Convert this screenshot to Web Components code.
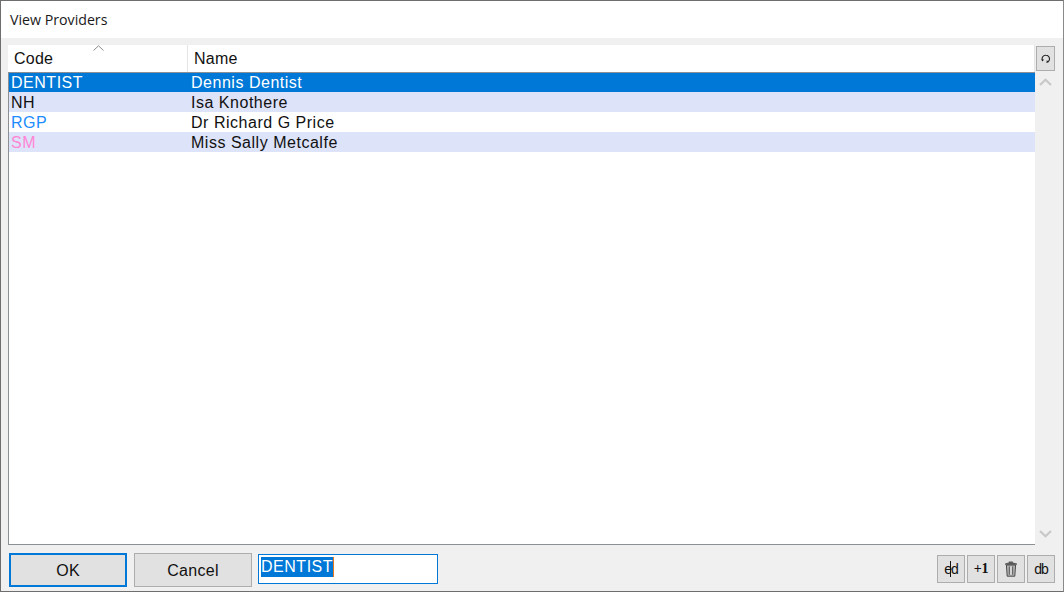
<!DOCTYPE html>
<html>
<head>
<meta charset="utf-8">
<title>View Providers</title>
<style>
  html, body { margin: 0; padding: 0; background: #f0f0f0; }
  body { width: 1064px; height: 592px; overflow: hidden; }
</style>
</head>
<body>
<provider-dialog heading="View Providers">
  <provider-grid>
    <provider-row code="DENTIST" name="Dennis Dentist" selected></provider-row>
    <provider-row code="NH" name="Isa Knothere" striped></provider-row>
    <provider-row code="RGP" name="Dr Richard G Price" code-color="#1e8cff"></provider-row>
    <provider-row code="SM" name="Miss Sally Metcalfe" code-color="#ff85d5" striped></provider-row>
  </provider-grid>
  <dialog-button slot="footer" default>OK</dialog-button>
  <dialog-button slot="footer">Cancel</dialog-button>
  <code-field slot="footer" value="DENTIST"></code-field>
  <tool-button slot="tools" kind="ed">ed</tool-button>
  <tool-button slot="tools" kind="plus">+1</tool-button>
  <tool-button slot="tools" icon="trash"></tool-button>
  <tool-button slot="tools" kind="db">db</tool-button>
</provider-dialog>

<script>
class ProviderDialog extends HTMLElement {
  constructor() {
    super();
    const shadow = this.attachShadow({ mode: 'open' });
    shadow.innerHTML = `
    <style>
      :host {
        display: flex;
        flex-direction: column;
        box-sizing: border-box;
        width: 1064px;
        height: 592px;
        border: 1px solid #6e6e6e;
        border-right-color: #8a8a8a;
        background: #f0f0f0;
        font-family: "Liberation Sans", Arial, sans-serif;
      }
      .title {
        height: 37px;
        flex: none;
        box-sizing: border-box;
        padding: 10px 0 0 9px;
        background: #fff;
        font: 14.2px/18px "Open Sans", "Noto Sans", sans-serif;
        color: #1a1a1a;
      }
      .main {
        flex: 1;
        min-height: 0;
        display: flex;
        padding: 7px 8px 0 7px;
      }
      .footer {
        flex: none;
        height: 46px;
        box-sizing: border-box;
        display: flex;
        justify-content: space-between;
        padding: 8px 8px 0 8px;
      }
      .left { display: flex; gap: 7px; }
      .right { display: flex; gap: 2px; padding-top: 2px; }
      ::slotted(code-field) { margin-left: -1px; }
    </style>
    <div class="title"></div>
    <div class="main"><slot></slot></div>
    <div class="footer">
      <div class="left"><slot name="footer"></slot></div>
      <div class="right"><slot name="tools"></slot></div>
    </div>`;
  }
  connectedCallback() {
    this.shadowRoot.querySelector('.title').textContent = this.getAttribute('heading');
  }
}

class ProviderGrid extends HTMLElement {
  constructor() {
    super();
    const shadow = this.attachShadow({ mode: 'open' });
    shadow.innerHTML = `
    <style>
      :host { display: flex; flex: 1; min-width: 0; }
      .table { flex: 1; display: flex; flex-direction: column; min-width: 0; }
      .head {
        flex: none;
        height: 27px;
        display: flex;
        background: #fff;
        font-size: 16px;
        letter-spacing: .25px;
        color: #111;
      }
      .head div { box-sizing: border-box; position: relative; line-height: 28px; }
      .code { width: 180px; padding-left: 6px; border-right: 1px solid #e5e5e5; }
      .name { flex: 1; padding-left: 6px; border-right: 1px solid #e5e5e5; }
      .sort { position: absolute; left: 85px; top: 0; display: block; }
      .rows {
        flex: 1;
        background: #fff;
        border: solid #8c8f94;
        border-width: 1px 0 1px 1px;
        min-height: 0;
      }
      .scroll {
        flex: none;
        width: 19px;
        margin-left: 1px;
        display: flex;
        flex-direction: column;
        align-items: center;
      }
      .refresh {
        box-sizing: border-box;
        width: 19px;
        height: 25px;
        margin-top: 1px;
        background: #e1e1e1;
        border: 1px solid #adadad;
        display: flex;
        align-items: center;
        justify-content: center;
      }
      .up { margin-top: 7px; }
      .down { margin-top: auto; margin-bottom: 7px; }
    </style>
    <div class="table">
      <div class="head">
        <div class="code">Code<svg class="sort" width="11" height="6" viewBox="0 0 11 6"><path d="M.5 5.5 5.5.8l5 4.7" fill="none" stroke="#8a8a8a"/></svg></div>
        <div class="name">Name</div>
      </div>
      <div class="rows"><slot></slot></div>
    </div>
    <div class="scroll">
      <div class="refresh"><svg width="10" height="10" viewBox="0 0 10 10"><path d="M1.6 6.4A3.5 3.5 0 0 1 5 1.2 3.5 3.5 0 0 1 8.5 4.8 3.5 3.5 0 0 1 6.6 8" fill="none" stroke="#222" stroke-width="1.1"/><path d="M.2 5.6h2.8L1.6 7.6zM5.8 6.2l2.2 1.9-2.6 1z" fill="#222"/></svg></div>
      <svg class="up" width="13" height="8" viewBox="0 0 13 8"><path d="M1 7 6.5 1.8 12 7" fill="none" stroke="#c8c8c8" stroke-width="2.2"/></svg>
      <svg class="down" width="13" height="8" viewBox="0 0 13 8"><path d="M1 1 6.5 6.2 12 1" fill="none" stroke="#c8c8c8" stroke-width="2.2"/></svg>
    </div>`;
  }
}

class ProviderRow extends HTMLElement {
  constructor() {
    super();
    const shadow = this.attachShadow({ mode: 'open' });
    shadow.innerHTML = `
    <style>
      :host {
        display: flex;
        height: 20px;
        font-size: 16px;
        letter-spacing: .52px;
        line-height: 22px;
        color: #111;
      }
      :host([striped]) { background: #dde3f9; }
      :host([selected]) { background: #0078d7; color: #fff; height: 19px; line-height: 20px; }
      .code { width: 180px; padding-left: 2px; box-sizing: border-box; }
      .name { flex: 1; padding-left: 2px; }
    </style>
    <div class="code"></div><div class="name"></div>`;
  }
  connectedCallback() {
    const code = this.shadowRoot.querySelector('.code');
    code.textContent = this.getAttribute('code');
    if (this.hasAttribute('code-color')) code.style.color = this.getAttribute('code-color');
    this.shadowRoot.querySelector('.name').textContent = this.getAttribute('name');
  }
}

class DialogButton extends HTMLElement {
  constructor() {
    super();
    const shadow = this.attachShadow({ mode: 'open' });
    shadow.innerHTML = `
    <style>
      :host {
        display: flex;
        align-items: center;
        justify-content: center;
        box-sizing: border-box;
        width: 118px;
        height: 34px;
        padding-top: 1px;
        background: #e1e1e1;
        border: 1px solid #adadad;
        font-size: 16px;
        letter-spacing: .3px;
        color: #111;
      }
      :host([default]) { border: 2px solid #0078d7; }
    </style>
    <slot></slot>`;
  }
}

class CodeField extends HTMLElement {
  constructor() {
    super();
    const shadow = this.attachShadow({ mode: 'open' });
    shadow.innerHTML = `
    <style>
      :host {
        display: block;
        box-sizing: border-box;
        width: 180px;
        height: 30px;
        margin-top: 1px;
        padding: 2px 0 0 2px;
        background: #fff;
        border: 1px solid #0078d7;
        font-size: 16px;
        letter-spacing: .52px;
        line-height: 20px;
      }
      span {
        display: inline-block;
        background: #0078d7;
        color: #fff;
        border-right: 1px solid #e8781e;
      }
    </style>
    <span></span>`;
  }
  connectedCallback() {
    this.shadowRoot.querySelector('span').textContent = this.getAttribute('value');
  }
}

class ToolButton extends HTMLElement {
  constructor() {
    super();
    const shadow = this.attachShadow({ mode: 'open' });
    shadow.innerHTML = `
    <style>
      :host {
        display: flex;
        align-items: center;
        justify-content: center;
        box-sizing: border-box;
        position: relative;
        width: 28px;
        height: 28px;
        background: #e1e1e1;
        border: 1px solid #adadad;
        font-size: 14px;
        letter-spacing: -1px;
        color: #111;
      }
      :host([kind="plus"]) { font: bold 14px "Liberation Serif", serif; letter-spacing: -.3px; }
      .cursor { position: absolute; left: 12px; top: 5px; width: 1px; height: 16px; background: #111; }
    </style>
    <slot></slot>`;
  }
  connectedCallback() {
    if (this.getAttribute('icon') === 'trash') {
      this.shadowRoot.innerHTML += `<svg width="14" height="16" viewBox="0 0 14 16">
        <path d="M1 2.4 4.8 1.4V.5h4v.9L13 2.4v1.3H1z" fill="#5a5a5a"/>
        <path d="M2.4 4h9.2l-.8 11.2H3.2z" fill="#b5b5b5" stroke="#3c3c3c" stroke-width=".9"/>
        <path d="M5.3 5.5v8.2M8.7 5.5v8.2" stroke="#555"/>
        <path d="M7 5.5v8.2" stroke="#f2f2f2"/>
      </svg>`;
    }
    if (this.getAttribute('kind') === 'ed') {
      this.shadowRoot.innerHTML += '<div class="cursor"></div>';
    }
  }
}

customElements.define('provider-dialog', ProviderDialog);
customElements.define('provider-grid', ProviderGrid);
customElements.define('provider-row', ProviderRow);
customElements.define('dialog-button', DialogButton);
customElements.define('code-field', CodeField);
customElements.define('tool-button', ToolButton);
</script>
</body>
</html>
